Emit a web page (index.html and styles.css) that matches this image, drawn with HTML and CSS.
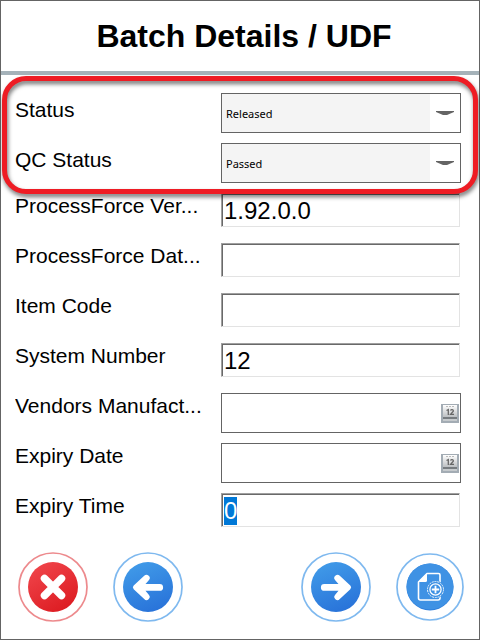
FILE: index.html
```html
<!DOCTYPE html>
<html lang="en">
<head>
<meta charset="utf-8">
<meta name="viewport" content="width=device-width, initial-scale=1">
<title>Batch Details / UDF</title>
<link rel="stylesheet" href="styles.css">
</head>
<body>
<form class="screen">
  <header class="header"><h1 class="title">Batch Details / UDF</h1></header>
  <main class="fields">
    <div class="highlight">
      <div class="row row-select">
        <label class="label" for="status">Status</label>
        <div class="control">
          <select class="select" id="status"><option>Released</option></select>
          <svg class="arrow" viewBox="0 0 18 4" aria-hidden="true"><path d="M0 0H18V1L11 4H7L0 1Z"/></svg>
        </div>
      </div>
      <div class="row row-select">
        <label class="label" for="qc">QC Status</label>
        <div class="control">
          <select class="select" id="qc"><option>Passed</option></select>
          <svg class="arrow" viewBox="0 0 18 4" aria-hidden="true"><path d="M0 0H18V1L11 4H7L0 1Z"/></svg>
        </div>
      </div>
    </div>
    <div class="row">
      <label class="label" for="version">ProcessForce Ver...</label>
      <div class="control"><input class="input" id="version" type="text" value="1.92.0.0"></div>
    </div>
    <div class="row">
      <label class="label" for="database">ProcessForce Dat...</label>
      <div class="control"><input class="input" id="database" type="text"></div>
    </div>
    <div class="row">
      <label class="label" for="item">Item Code</label>
      <div class="control"><input class="input" id="item" type="text"></div>
    </div>
    <div class="row">
      <label class="label" for="number">System Number</label>
      <div class="control"><input class="input" id="number" type="text" value="12"></div>
    </div>
    <div class="row">
      <label class="label" for="vendor">Vendors Manufact...</label>
      <div class="control date">
        <input class="date-input" id="vendor" type="text">
        <button class="calendar" type="button" aria-label="Choose date">
          <svg viewBox="0 0 18 19" aria-hidden="true">
            <defs><linearGradient id="cal" x1="0" y1="0" x2="0" y2="1"><stop offset="0" stop-color="#fff"/><stop offset="1" stop-color="#bcbfc2"/></linearGradient></defs>
            <path fill="#a3acb4" d="M0 0H18V19H0Z"/><path fill="url(#cal)" d="M2 1H16V13H2Z"/>
            <path fill="#777c80" d="M2 13H16V15H2Z"/><path fill="#c6cacd" d="M2 15H16V17H2Z"/>
            <path stroke="#bbb" stroke-dasharray="2 1" d="M5 2.500H13"/>
            <path fill="none" stroke="#666" stroke-width="1.300" d="M5.500 6.500L7.300 5.500V11M9.500 6.500Q10 5.500 11 5.600Q12.600 5.800 12.300 7.300L9.600 10.400H13"/>
          </svg>
        </button>
      </div>
    </div>
    <div class="row">
      <label class="label" for="expiry">Expiry Date</label>
      <div class="control date">
        <input class="date-input" id="expiry" type="text">
        <button class="calendar" type="button" aria-label="Choose date">
          <svg viewBox="0 0 18 19" aria-hidden="true">
            <path fill="#a3acb4" d="M0 0H18V19H0Z"/><path fill="url(#cal)" d="M2 1H16V13H2Z"/>
            <path fill="#777c80" d="M2 13H16V15H2Z"/><path fill="#c6cacd" d="M2 15H16V17H2Z"/>
            <path stroke="#bbb" stroke-dasharray="2 1" d="M5 2.500H13"/>
            <path fill="none" stroke="#666" stroke-width="1.300" d="M5.500 6.500L7.300 5.500V11M9.500 6.500Q10 5.500 11 5.600Q12.600 5.800 12.300 7.300L9.600 10.400H13"/>
          </svg>
        </button>
      </div>
    </div>
    <div class="row">
      <label class="label" for="time">Expiry Time</label>
      <div class="control"><input class="input" id="time" type="text" value="0"></div>
    </div>
  </main>
  <footer class="footer">
    <div class="actions">
      <button class="round" type="button" aria-label="Cancel">
        <svg viewBox="0 0 70 70" aria-hidden="true">
          <defs><linearGradient id="red" x1=".2" y1="0" x2=".8" y2="1"><stop offset="0" stop-color="#f0454b"/><stop offset="1" stop-color="#dc1a20"/></linearGradient></defs>
          <circle cx="35" cy="35" r="34" fill="#fff" stroke="#ed8a8d" stroke-width="1.700"/>
          <circle cx="35" cy="35" r="25" fill="url(#red)"/>
          <path d="M26.500 26.500L43.500 43.500M43.500 26.500L26.500 43.500" stroke="#fff" stroke-width="7.500" stroke-linecap="round"/>
        </svg>
      </button>
      <button class="round" type="button" aria-label="Back">
        <svg viewBox="0 0 70 70" aria-hidden="true">
          <defs><linearGradient id="blue" x1=".3" y1="0" x2=".7" y2="1"><stop offset="0" stop-color="#409ae8"/><stop offset="1" stop-color="#2872d9"/></linearGradient></defs>
          <circle cx="35" cy="35" r="34" fill="#fff" stroke="#7fb9ef" stroke-width="1.700"/>
          <circle cx="35" cy="35" r="25" fill="url(#blue)"/>
          <path fill="#fff" d="M31.200 23.800A3.100 3.100 0 0 1 35.800 28.200L32.500 32H46.700A3.400 3.400 0 0 1 46.700 38.800H32.500L35.800 42.800A3.100 3.100 0 0 1 31.200 47L20.700 37.200Q19 35.400 20.700 33.600Z"/>
        </svg>
      </button>
    </div>
    <div class="actions">
      <button class="round" type="button" aria-label="Next">
        <svg viewBox="0 0 70 70" aria-hidden="true">
          <circle cx="35" cy="35" r="34" fill="#fff" stroke="#7fb9ef" stroke-width="1.700"/>
          <circle cx="35" cy="35" r="25" fill="url(#blue)"/>
          <path fill="#fff" d="M38.800 23.800A3.100 3.100 0 0 0 34.200 28.200L37.500 32H23.300A3.400 3.400 0 0 0 23.300 38.800H37.500L34.200 42.800A3.100 3.100 0 0 0 38.800 47L49.300 37.200Q51 35.400 49.300 33.600Z"/>
        </svg>
      </button>
      <button class="round round-small" type="button" aria-label="Add document">
        <svg viewBox="0 0 68 68" aria-hidden="true">
          <circle cx="34" cy="34" r="33" fill="#fff" stroke="#7fb9ef" stroke-width="1.700"/>
          <circle cx="34" cy="34" r="23.500" fill="#2f7fdc"/>
          <ellipse cx="34" cy="33.500" rx="23.500" ry="23" fill="#3f92e4"/>
          <path fill="none" stroke="#fff" stroke-width="1.600" stroke-linejoin="round" d="M44 29V22Q44 20.500 42.500 20.500H31L22.500 29V45Q22.500 47 24.500 47H42Q44 47 44 45V43"/>
          <path fill="#fff" d="M31 20.500V27.500Q31 29 29.500 29H22.500Z"/>
          <circle cx="39.500" cy="36.500" r="9" fill="#3f92e4"/>
          <circle cx="39.500" cy="36.500" r="8" fill="none" stroke="#fff" stroke-width=".9" stroke-dasharray="2 .8"/>
          <circle cx="39.500" cy="36.500" r="5.600" fill="none" stroke="#fff" stroke-width="1.300"/>
          <path stroke="#fff" stroke-width="1.800" d="M39.500 32.800V40.200M35.800 36.500H43.200"/>
        </svg>
      </button>
    </div>
  </footer>
</form>
<script src="script.js"></script>
</body>
</html>
```
FILE: styles.css
```css
* { box-sizing: border-box; }

body {
  margin: 0;
  background: #fff;
  color: #000;
  font-family: "Liberation Sans", Arial, sans-serif;
}

.screen {
  display: flex;
  flex-direction: column;
  min-height: 100vh;
  border: 1px solid #646464;
}

.header {
  padding: 16px 0 15px 8px;
  border-bottom: 4px solid #a5b2b9;
  text-align: center;
}

.title {
  margin: 0;
  font-size: 32px;
  line-height: 39px;
}

.fields { padding: 18px 18px 0 14px; }

.row {
  display: grid;
  grid-template-columns: 206px minmax(0, 1fr);
  align-items: start;
  height: 50px;
}

.label {
  overflow: hidden;
  font-size: 21px;
  line-height: 26px;
  white-space: nowrap;
}

.row-select .label { padding-top: 4px; }

.control { position: relative; }

.highlight { position: relative; }

.highlight::after {
  content: "";
  position: absolute;
  z-index: 1;
  inset: -17px -17px -1px -13px;
  border: 5px solid #ee1c24;
  border-radius: 24px;
  filter: drop-shadow(1px 3px 2px rgba(0, 0, 0, 0.55));
  pointer-events: none;
}

.select {
  display: block;
  width: 100%;
  height: 40px;
  padding: 0 30px 0 4px;
  appearance: none;
  border: 1px solid #646464;
  border-radius: 0;
  background: linear-gradient(to left, #fff 30px, #f4f4f4 30px);
  color: #000;
  font: 11px "Noto Sans", sans-serif;
}

.arrow {
  position: absolute;
  top: 18px;
  right: 7px;
  width: 18px;
  height: 4px;
  fill: #646464;
  pointer-events: none;
}

.input {
  display: block;
  width: calc(100% - 1px);
  height: 34px;
  padding: 1px 1px 0 2px;
  border: 1px solid;
  border-color: #a0a0a0 #e3e3e3 #e3e3e3 #a0a0a0;
  outline: none;
  box-shadow: inset 1px 1px #696969;
  font: 24px/29px "Liberation Sans", Arial, sans-serif;
}

.input::selection {
  background: #0078d7;
  color: #fff;
}

.date {
  display: flex;
  align-items: center;
  height: 40px;
  padding-right: 1px;
  border: 1px solid #646464;
}

.date-input {
  flex: 1;
  min-width: 0;
  height: 100%;
  padding: 0 4px;
  border: 0;
  outline: none;
  background: none;
  font: 24px "Liberation Sans", Arial, sans-serif;
}

.calendar {
  width: 18px;
  height: 19px;
  padding: 0;
  border: 0;
  background: none;
}

.calendar svg,
.round svg {
  display: block;
  width: 100%;
  height: 100%;
}

.footer {
  display: flex;
  justify-content: space-between;
  padding: 9px 15px 16px 17px;
}

.actions {
  display: flex;
  align-items: center;
  gap: 25px;
}

.round {
  width: 70px;
  height: 70px;
  padding: 0;
  border: 0;
  border-radius: 50%;
  background: none;
}

.round-small {
  width: 68px;
  height: 68px;
}
```
FILE: script.js
```js
const time = document.getElementById("time");
time.focus();
time.select();
```
